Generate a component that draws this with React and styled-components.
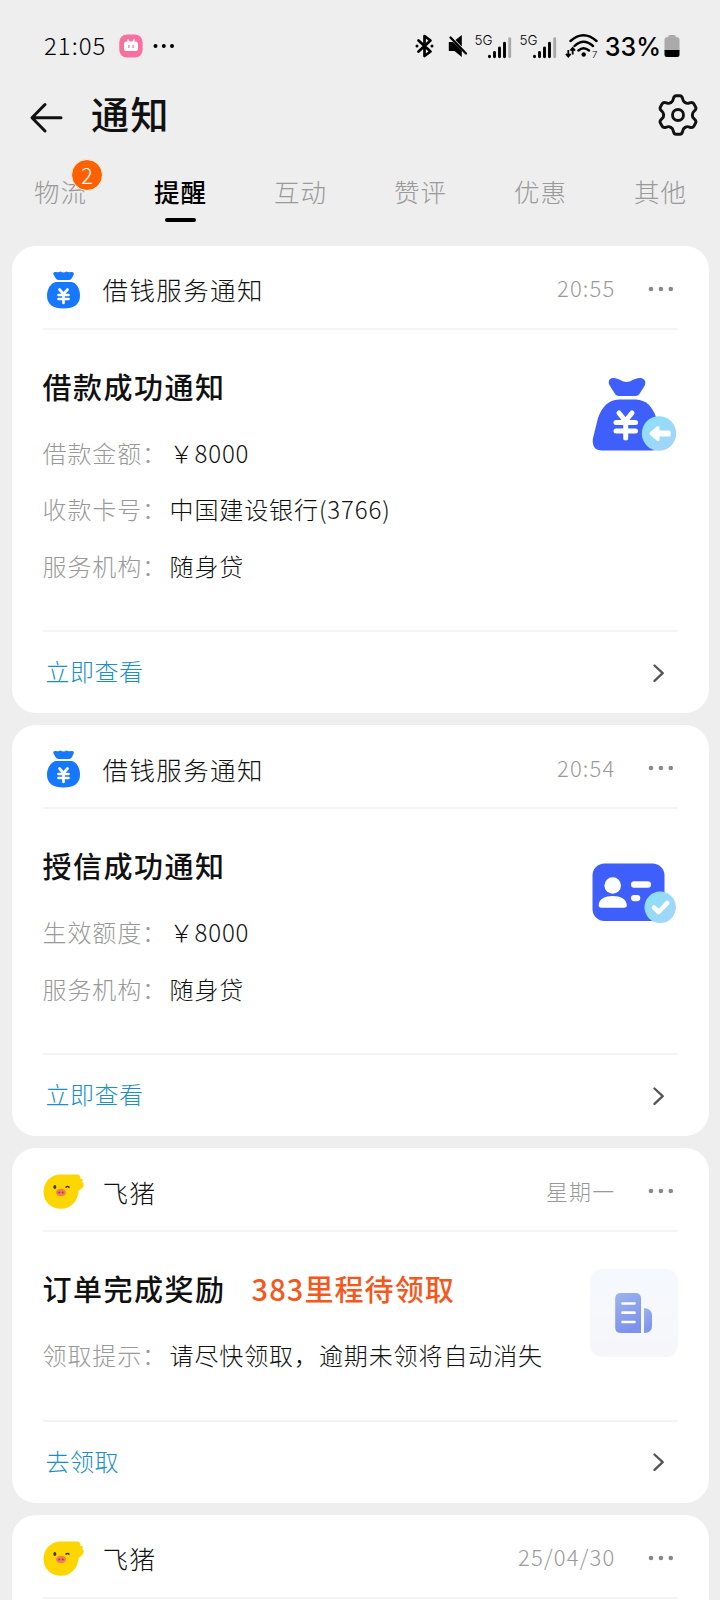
import React from "react";
import styled, { createGlobalStyle } from "styled-components";

const GlobalStyle = createGlobalStyle`
  * {
    box-sizing: border-box;
  }
  body {
    margin: 0;
    background: #eeeeee;
    font-family: "Noto Sans CJK SC", sans-serif;
    font-weight: 300;
    color: #111;
  }
  svg {
    display: block;
    flex: none;
  }
`;

const tabs = [
  { name: "物流", count: 2 },
  { name: "提醒", active: true },
  { name: "互动" },
  { name: "赞评" },
  { name: "优惠" },
  { name: "其他" },
];

const cards = [
  {
    source: "借钱服务通知",
    icon: "money",
    time: "20:55",
    title: "借款成功通知",
    rows: [
      ["借款金额：", "￥8000"],
      ["收款卡号：", "中国建设银行(3766)"],
      ["服务机构：", "随身贷"],
    ],
    picture: "loan",
    link: "立即查看",
  },
  {
    source: "借钱服务通知",
    icon: "money",
    time: "20:54",
    title: "授信成功通知",
    rows: [
      ["生效额度：", "￥8000"],
      ["服务机构：", "随身贷"],
    ],
    picture: "credit",
    link: "立即查看",
  },
  {
    source: "飞猪",
    icon: "pig",
    time: "星期一",
    title: "订单完成奖励",
    extra: "383里程待领取",
    rows: [["领取提示：", "请尽快领取，逾期未领将自动消失"]],
    picture: "order",
    link: "去领取",
  },
  { source: "飞猪", icon: "pig", time: "25/04/30", rows: [] },
];

const Signal = () => (
  <svg width="37" height="26" viewBox="0 0 37 26">
    <text x="-.5" y="12" fontFamily="Inter" fontSize="13.500" fontWeight="300">
      5G
    </text>
    <g strokeWidth="2.900" strokeLinecap="round" stroke="#000">
      <path d="M14.500 23.300v.5M19.500 19.500v4.300M24.500 15V23.800M29.500 10.300v13.500" />
      <path d="M34.700 5.800V23.800" stroke="#aaa" />
    </g>
  </svg>
);

const MoneyIcon = () => (
  <svg width="40" height="40" viewBox="0 0 40 40">
    <path
      fill="#1677ff"
      d="M10 2Q12.500 2.800 14.500 1.500Q17.500 3.300 20.500 1.500Q22.500 2.800 25 2Q28.500 1.500 27.700 4.500L26 8Q25 10 23 10H12.500Q10.500 10 9.500 8L7.500 4.500Q6.500 1.500 10 2Z"
    />
    <path
      fill="#1677ff"
      d="M10 12H25.500C30 12.500 34 18.500 34 25.500C34 34.500 28 38.500 17.500 38.500C7 38.500 1 34.500 1 25.500C1 18.500 5.500 12.500 10 12Z"
    />
    <path
      d="M13.500 19.500l4 4.500 4-4.500M12.500 25h10M12.500 29h10M17.500 24v9"
      fill="none"
      stroke="#fff"
      strokeWidth="2.700"
      strokeLinecap="round"
    />
  </svg>
);

const PigIcon = () => (
  <svg width="41" height="36" viewBox="0 0 41 36">
    <path
      fill="#fdd600"
      d="M17.500.5H35Q38 1.500 37.500 5Q41 4.500 39.200 8Q41.500 9.500 40.200 12.500Q38 16 35.800 16.500C35 27 28 34.800 18 34.800C8 34.800.5 27.500.5 18C.5 8 8 .5 17.500.5Z"
    />
    <ellipse cx="11.800" cy="13" rx="1.500" ry="2" fill="#493022" />
    <path
      d="M22.500 13.500Q24.500 11.500 26.500 13.500"
      fill="none"
      stroke="#493022"
      strokeWidth="1.500"
    />
    <ellipse cx="18" cy="18.500" rx="5" ry="3.800" fill="#f27d5d" />
    <circle cx="16.300" cy="18.500" r="1" fill="#a6402e" />
    <circle cx="19.700" cy="18.500" r="1" fill="#a6402e" />
  </svg>
);

const BadgeGradient = ({ id }) => (
  <linearGradient id={id} x1="0" y1="0" x2="1" y2="1">
    <stop offset="0" stopColor="#8be0f8" />
    <stop offset="1" stopColor="#a5d3fa" />
  </linearGradient>
);

const LoanPicture = () => (
  <svg width="86" height="76" viewBox="0 0 86 76">
    <defs>
      <BadgeGradient id="loanBadge" />
    </defs>
    <path
      fill="#3e5ffc"
      d="M21 2C26 1.500 30 6 34.500 6C39 6 43 1.500 48.500 2C53 2.500 54.500 6 52.500 10L48 17Q46.500 20 43.500 20H27Q24 20 22.500 17L18 10C15.500 5.500 17 2.500 21 2Z"
    />
    <path
      fill="#3e5ffc"
      d="M27 23.500H44C54 24 60 30 64 41L68 61Q70 74.500 60 74.500H10Q0 74.500 .8 63L6 42C10 31 16 24 27 23.500Z"
    />
    <path
      d="M27 37l6.500 8 6.500-8M24 46.500h19.500M24 55h19.500M33.700 46v16"
      fill="none"
      stroke="#fff"
      strokeWidth="5"
      strokeLinecap="round"
      strokeLinejoin="round"
    />
    <circle cx="67" cy="57.500" r="17.200" fill="url(#loanBadge)" />
    <path
      fill="#fff"
      stroke="#fff"
      strokeWidth="3"
      strokeLinejoin="round"
      d="M59 57.500L66 51.500V56H77.200V59H66V63.500Z"
    />
  </svg>
);

const CreditPicture = () => (
  <svg width="86" height="62" viewBox="0 0 86 62">
    <defs>
      <BadgeGradient id="creditBadge" />
    </defs>
    <rect x=".5" y=".5" width="72" height="57.500" rx="12" fill="#3e5ffc" />
    <circle cx="20.700" cy="22.500" r="8.300" fill="#fff" />
    <path
      fill="#fff"
      d="M6.700 42C7 36 13 33 20.700 33C28.500 33 34.500 36 34.800 42Q35 44.800 32 44.800H9.500Q6.500 44.800 6.700 42Z"
    />
    <rect x="39" y="18.300" width="20" height="6.400" rx="3.200" fill="#fff" />
    <rect x="39" y="32" width="9.300" height="6.200" rx="3.100" fill="#fff" />
    <circle cx="68.200" cy="44.300" r="15.700" fill="url(#creditBadge)" />
    <path
      d="M62 44.500l4.700 4.500 8.500-9"
      fill="none"
      stroke="#fff"
      strokeWidth="4.600"
      strokeLinecap="round"
      strokeLinejoin="round"
    />
  </svg>
);

const OrderPicture = () => (
  <svg width="88" height="88" viewBox="0 0 88 88">
    <defs>
      <linearGradient id="orderBack" x1="0" y1="0" x2="0" y2="1">
        <stop offset="0" stopColor="#f5f9fd" />
        <stop offset="1" stopColor="#f6f6fa" />
      </linearGradient>
      <linearGradient id="orderSheet" x1="0" y1="0" x2=".4" y2="1">
        <stop offset="0" stopColor="#9db4ee" />
        <stop offset="1" stopColor="#7d92ea" />
      </linearGradient>
    </defs>
    <rect width="88" height="88" rx="12" fill="url(#orderBack)" />
    <path
      fill="url(#orderSheet)"
      d="M31 24H45.500Q51 24 51 29.500V64H31Q25.200 64 25.200 58.500V29.500Q25.200 24 31 24Z"
    />
    <path fill="url(#orderSheet)" d="M54 39Q62 39.500 62 47V57Q62 64 54 64Z" />
    <path
      d="M32.500 34.500h12M32.500 43.700h12M32.500 53h12"
      stroke="#fff"
      strokeWidth="2.700"
      strokeLinecap="round"
    />
  </svg>
);

const GEAR_TOOTH =
  "M-7.200 12.400C-5.400 13.200-5 14-4.700 16C-4.300 18.400-3.500 19.300-1.800 19.300L1.800 19.300C3.500 19.300 4.300 18.400 4.700 16C5 14 5.400 13.200 7.200 12.400";

// one tooth outline, repeated every 60 degrees
const GearIcon = () => (
  <svg width="42" height="44" viewBox="-21 -22 42 44">
    <g fill="none" stroke="#111" strokeWidth="2.900" strokeLinecap="round">
      {[0, 60, 120, 180, 240, 300].map((deg) => (
        <path key={deg} d={GEAR_TOOTH} transform={`rotate(${deg})`} />
      ))}
      <circle r="5.500" />
    </g>
  </svg>
);

const icons = { money: MoneyIcon, pig: PigIcon };
const pictures = {
  loan: LoanPicture,
  credit: CreditPicture,
  order: OrderPicture,
};

const Card = ({ card }) => {
  const Icon = icons[card.icon];
  const Picture = pictures[card.picture];
  return (
    <CardBox>
      <CardHead>
        <IconCell $kind={card.icon}>
          <Icon />
        </IconCell>
        <Source>{card.source}</Source>
        <Time>{card.time}</Time>
        <svg width="26" height="6" viewBox="0 0 26 6" fill="#888">
          <circle cx="3" cy="3" r="2.300" />
          <circle cx="12.900" cy="3" r="2.300" />
          <circle cx="22.800" cy="3" r="2.300" />
        </svg>
      </CardHead>
      {card.title && (
        <>
          <CardBody>
            <Detail>
              <Title>
                {card.title}
                {card.extra && <Extra>{card.extra}</Extra>}
              </Title>
              {card.rows.map(([label, value]) => (
                <Row key={label}>
                  <Label>{label}</Label>
                  <span>{value}</span>
                </Row>
              ))}
            </Detail>
            <PictureCell $kind={card.picture}>
              <Picture />
            </PictureCell>
          </CardBody>
          <CardFoot>
            <FootLink>{card.link}</FootLink>
            <svg width="12" height="20" viewBox="0 0 12 20">
              <path
                d="M1.500 2.500l8.200 7.700-8.200 7.700"
                fill="none"
                stroke="#555"
                strokeWidth="2.300"
                strokeLinecap="round"
                strokeLinejoin="round"
              />
            </svg>
          </CardFoot>
        </>
      )}
    </CardBox>
  );
};

const App = () => {
  return (
    <Page>
      <GlobalStyle />
      <StatusBar>
        <Clock>21:05</Clock>
        <svg width="24" height="24" viewBox="0 0 24 24">
          <rect x=".3" y=".5" width="23.300" height="23" rx="7.500" fill="#f9709f" />
          <path
            d="M9 6l.8 2M15 6l-.8 2"
            stroke="#fff"
            strokeWidth="1.800"
            strokeLinecap="round"
          />
          <rect x="5" y="7.500" width="14" height="9.500" rx="2.500" fill="#fff" />
          <path
            d="M9.900 11.500v2M14.100 11.500v2"
            stroke="#f9709f"
            strokeWidth="1.300"
            strokeLinecap="round"
          />
        </svg>
        <MoreDots width="22" height="6" viewBox="0 0 22 6">
          <circle cx="2.500" cy="3" r="2" />
          <circle cx="10.800" cy="3" r="2" />
          <circle cx="19" cy="3" r="2" />
        </MoreDots>
        <StatusIcons>
          <svg width="19" height="24" viewBox="0 0 19 24">
            <path
              d="M3.500 6.500L15.500 17.500L9.500 22V2l6 4.500L3.500 17.500"
              fill="none"
              stroke="#000"
              strokeWidth="2.700"
              strokeLinejoin="round"
              strokeLinecap="round"
            />
            <circle cx="2" cy="12" r="1.500" />
            <circle cx="17" cy="12" r="1.500" />
          </svg>
          <MuteIcon width="20" height="24" viewBox="0 0 20 24">
            <path d="M7.500 6L13.800 1V12.500Z" />
            <path d="M.8 8H5L13.800 16.500V23L6.500 17H.8Z" />
            <path
              d="M2.500 3.500L18 19.500"
              stroke="#000"
              strokeWidth="2.300"
              strokeLinecap="round"
            />
          </MuteIcon>
          <Signal />
          <Signal />
          <svg width="34" height="26" viewBox="0 0 34 26">
            <path
              d="M5.500 8Q18.500-3.500 31.500 8M9.500 13Q18.500 4.500 28 13M13.500 17.500Q18.500 13 24 17.500"
              fill="none"
              stroke="#000"
              strokeWidth="2.400"
              strokeLinecap="round"
            />
            <circle cx="18.700" cy="21.500" r="2.200" />
            <path
              d="M3.300 17v6M1 20.800l2.300 2.700 2.300-2.700M7.700 21.500v-6M5.400 17.700l2.300-2.700 2.300 2.700"
              fill="none"
              stroke="#000"
              strokeWidth="1.800"
            />
            <text x="27" y="24.500" fontFamily="Inter" fontSize="9.500">
              7
            </text>
          </svg>
          <Percent>33%</Percent>
          <svg width="16" height="24" viewBox="0 0 16 24">
            <path
              d="M4 3Q4 1 6 1H10Q12 1 12 3Q15.500 3 15.500 6V17H.5V6Q.5 3 4 3Z"
              fill="#aaa"
            />
            <path d="M.5 16H15.500V20.500Q15.500 23 13 23H3Q.5 23 .5 20.500Z" />
          </svg>
        </StatusIcons>
      </StatusBar>
      <Header>
        <BackIcon width="34" height="32" viewBox="0 0 34 32">
          <path
            d="M16 2.500L3 15.800l13 13.200M3.500 15.800h28.500"
            fill="none"
            stroke="#111"
            strokeWidth="3"
            strokeLinecap="round"
            strokeLinejoin="round"
          />
        </BackIcon>
        <Heading>通知</Heading>
        <GearIcon />
      </Header>
      <Tabs>
        {tabs.map((tab) => (
          <Tab key={tab.name} $active={tab.active}>
            {tab.name}
            {tab.count && <Badge>{tab.count}</Badge>}
          </Tab>
        ))}
      </Tabs>
      <CardList>
        {cards.map((card, i) => (
          <Card key={i} card={card} />
        ))}
      </CardList>
    </Page>
  );
};

const Page = styled.div`
  width: 720px;
  height: 1600px;
  overflow: hidden;
  background: #eeeeee;
`;

const StatusBar = styled.div`
  display: flex;
  align-items: center;
  height: 72px;
  padding: 20px 40px 0 44px;
`;

const Clock = styled.span`
  width: 75px;
  padding-bottom: 3px;
  font-size: 24px;
  line-height: 30px;
  letter-spacing: 1px;
  color: #000;
`;

const MoreDots = styled.svg`
  margin-left: 10px;
`;

const StatusIcons = styled.div`
  display: flex;
  align-items: center;
  margin-left: auto;
  gap: 8px;
`;

const MuteIcon = styled.svg`
  margin: 0 -1px 0 6px;
`;

const Percent = styled.span`
  margin: 1px -5px 0 -2px;
  font-family: Inter, sans-serif;
  font-size: 25px;
  font-weight: 500;
  line-height: 30px;
  color: #000;
`;

const Header = styled.div`
  display: flex;
  align-items: center;
  height: 86px;
  padding: 0 21px 0 29px;
`;

const BackIcon = styled.svg`
  margin-top: 6px;
`;

const Heading = styled.h1`
  flex: 1;
  margin: 0 0 5px 28px;
  font-size: 38px;
  font-weight: 500;
  line-height: 50px;
  letter-spacing: 1.500px;
`;

const Tabs = styled.div`
  display: grid;
  grid-template-columns: repeat(6, 1fr);
  height: 87.500px;
`;

const Tab = styled.div`
  position: relative;
  display: flex;
  flex-direction: column;
  align-items: center;
  padding: 15px 0 0 1px;
  font-size: 25.500px;
  line-height: 36px;
  letter-spacing: 1px;
  font-weight: ${(props) => (props.$active ? 500 : 300)};
  color: ${(props) => (props.$active ? "#000" : "#999")};
  &::after {
    content: "";
    width: 31px;
    height: 4px;
    margin-top: 9px;
    border-radius: 2px;
    background: ${(props) => (props.$active ? "#000" : "transparent")};
  }
`;

const Badge = styled.span`
  position: absolute;
  top: 1px;
  left: 71px;
  width: 32px;
  height: 32px;
  border: 1px solid #fff4e6;
  border-radius: 50%;
  background: #ff6000;
  color: #fff;
  font-size: 22px;
  font-weight: 300;
  line-height: 28px;
  letter-spacing: 0;
  text-align: center;
`;

const CardList = styled.div`
  display: flex;
  flex-direction: column;
  gap: 12px;
  padding: 0 11.500px;
`;

const CardBox = styled.section`
  flex: none;
  padding: 0 31px;
  border-radius: 24px;
  background: #fff;
  &:last-child {
    min-height: 120px;
  }
`;

const CardHead = styled.div`
  display: flex;
  align-items: center;
  height: 84px;
  padding: 4px 4px 0 0;
  border-bottom: 2px solid #f4f4f4;
`;

const IconCell = styled.div`
  display: flex;
  justify-content: center;
  width: 42px;
  margin-right: 18px;
  padding-left: ${(props) => (props.$kind === "money" ? 4 : 0)}px;
  padding-top: 2px;
`;

const Source = styled.span`
  flex: 1;
  padding-top: 1px;
  font-size: 25.500px;
  letter-spacing: 1.400px;
  line-height: 36px;
`;

const Time = styled.span`
  margin-right: 32px;
  padding-bottom: 3px;
  font-size: 22px;
  letter-spacing: 1.200px;
  line-height: 32px;
  color: #999;
`;

const CardBody = styled.div`
  display: flex;
  padding-bottom: 36px;
  border-bottom: 2px solid #f4f4f4;
`;

const Detail = styled.div`
  flex: 1;
`;

const Title = styled.h2`
  margin: 0;
  padding: 36px 0 19px;
  font-size: 29px;
  font-weight: 500;
  line-height: 40px;
  letter-spacing: 1.500px;
  white-space: nowrap;
`;

const Extra = styled.span`
  margin-left: 26px;
  letter-spacing: 1.100px;
  color: #f4581c;
`;

const Row = styled.div`
  display: flex;
  height: 56.500px;
  font-size: 24px;
  line-height: 56.500px;
  letter-spacing: 0.900px;
  white-space: nowrap;
`;

const Label = styled.span`
  width: 127px;
  color: #999;
`;

const PictureCell = styled.div`
  margin-top: ${(props) =>
    ({ loan: 46, credit: 54, order: 37 })[props.$kind]}px;
`;

const CardFoot = styled.div`
  display: flex;
  align-items: center;
  justify-content: space-between;
  height: 81px;
  padding: 0 13px 0 3px;
`;

const FootLink = styled.span`
  padding-bottom: 4px;
  font-size: 24px;
  letter-spacing: 0.500px;
  color: #1a90c8;
`;

export default App;
